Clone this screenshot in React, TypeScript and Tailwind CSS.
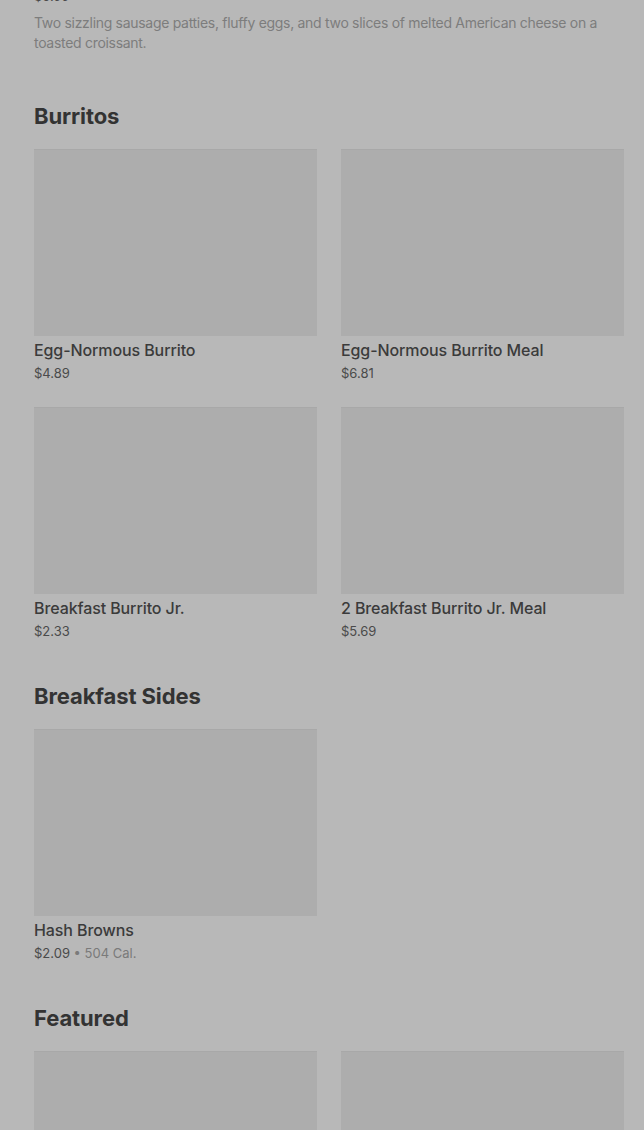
type Item = { name: string; price: string; cal?: string };

const sections: { title: string; items: Item[] }[] = [
  {
    title: 'Burritos',
    items: [
      { name: 'Egg-Normous Burrito', price: '$4.89' },
      { name: 'Egg-Normous Burrito Meal', price: '$6.81' },
      { name: 'Breakfast Burrito Jr.', price: '$2.33' },
      { name: '2 Breakfast Burrito Jr. Meal', price: '$5.69' },
    ],
  },
  {
    title: 'Breakfast Sides',
    items: [{ name: 'Hash Browns', price: '$2.09', cal: '504 Cal.' }],
  },
  {
    title: 'Featured',
    items: [
      { name: '', price: '' },
      { name: '', price: '' },
    ],
  },
];

function ItemCard({ item }: { item: Item }) {
  return (
    <div className="flex flex-col">
      <div className="h-[187px] bg-[#adadad] border-t border-[#a8a8a8]" />
      {item.name && (
        <>
          <p className="mt-[2px] text-[16px] leading-[24px] font-medium text-[#3b3b3b] tracking-[-0.1px]">{item.name}</p>
          <p className="text-[13px] leading-[20px] text-[#4a4a4a] translate-y-[1px]">
            {item.price}
            {item.cal && <span className="text-[#7a7a7a]"> • {item.cal}</span>}
          </p>
        </>
      )}
    </div>
  );
}

export default function App() {
  return (
    <div className="h-[1130px] overflow-hidden bg-[#b8b8b8] pl-[34px] pr-[20px] font-['Inter','Noto_Sans',sans-serif]">
      <div className="-mt-[13px]">
        <p className="text-[13px] leading-[18px] text-[#4a4a4a]">$5.99</p>
        <p className="mt-[8px] pr-[10px] text-[14px] leading-[20px] text-[#7d7d7d] tracking-[-0.3px]">
          Two sizzling sausage patties, fluffy eggs, and two slices of melted American cheese on a toasted croissant.
        </p>
      </div>

      {sections.map((s, i) => (
        <section key={s.title} className={i === 0 ? 'mt-[49px]' : 'mt-[42px]'}>
          <h2 className="text-[22px] leading-[28px] font-bold text-[#333333] tracking-[-0.1px]">{s.title}</h2>
          <div className="mt-[19px] grid grid-cols-2 gap-x-[24px] gap-y-[25px]">
            {s.items.map((item, j) => (
              <ItemCard key={j} item={item} />
            ))}
          </div>
        </section>
      ))}
    </div>
  );
}
